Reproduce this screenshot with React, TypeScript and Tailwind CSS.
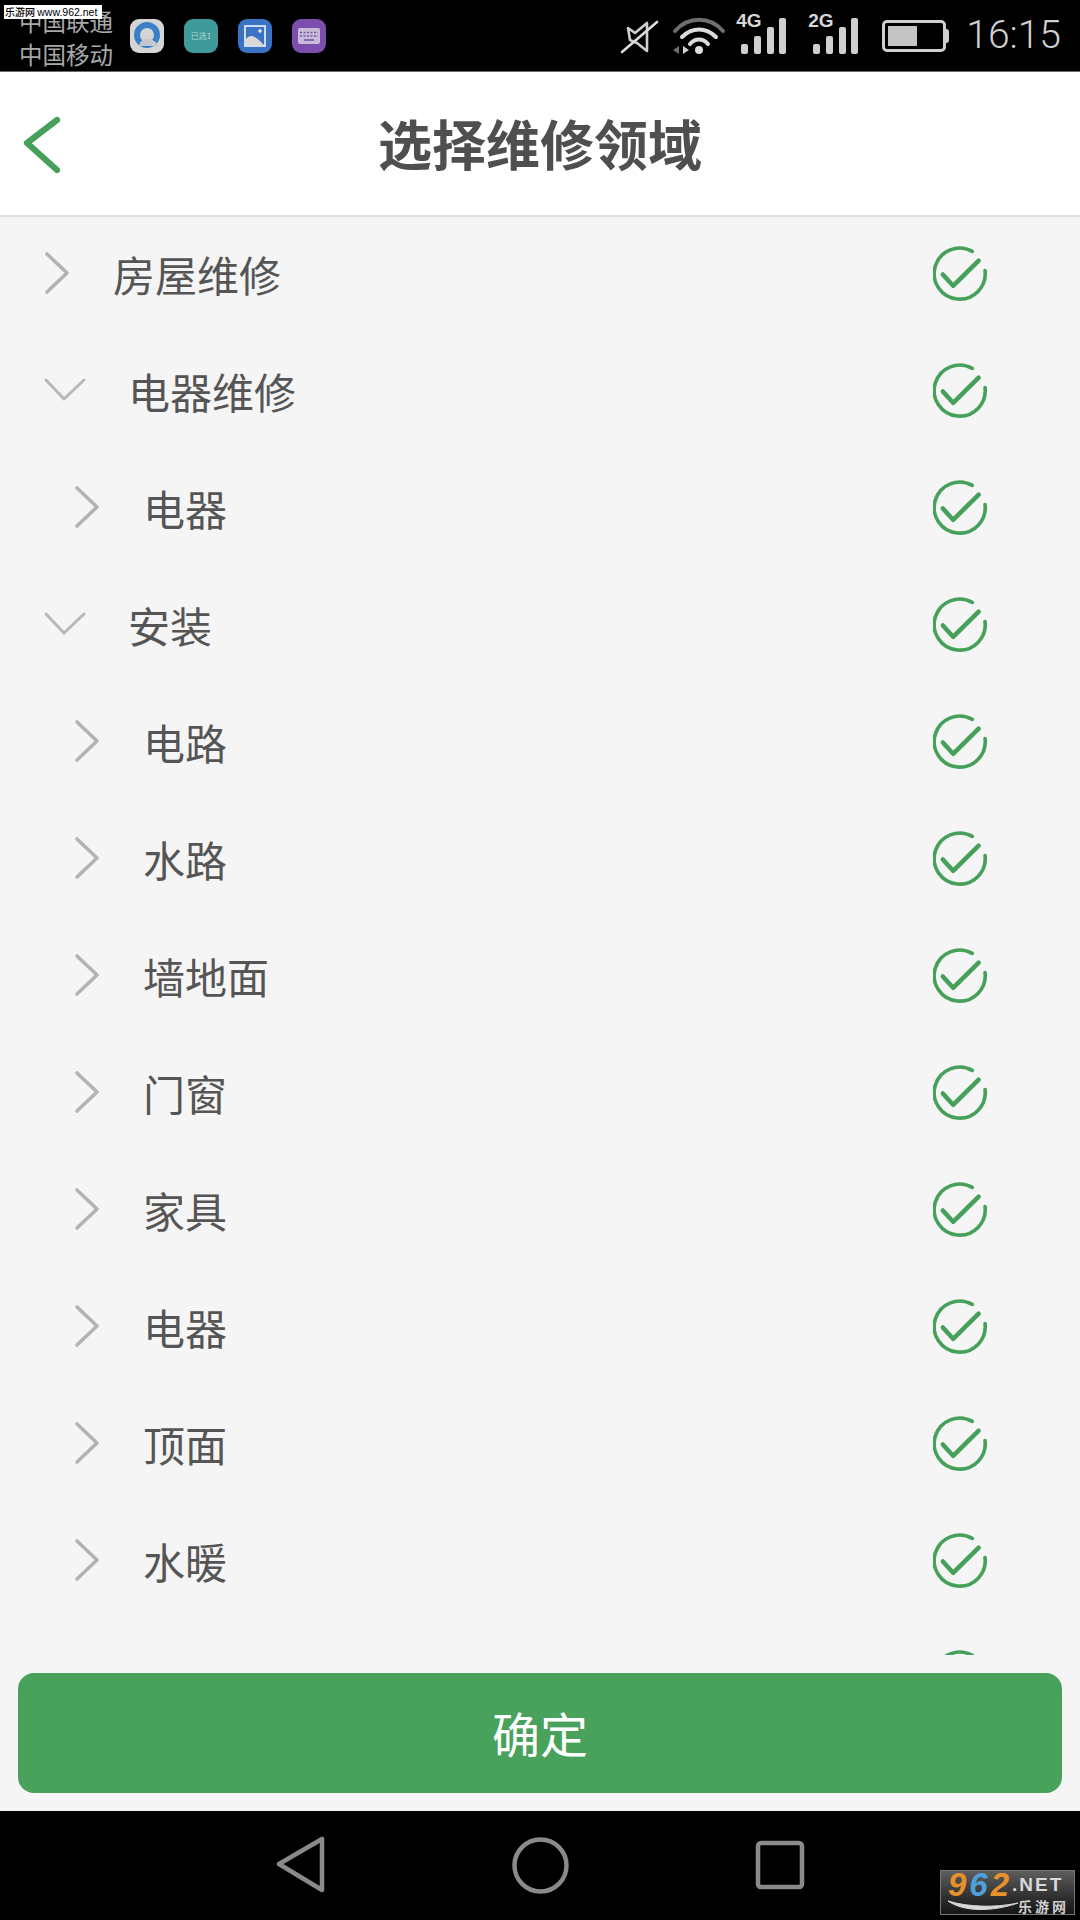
const CJK = { fontFamily: '"Noto Sans CJK SC", "Noto Sans", sans-serif' };

const rows: { t: string; kind: "r" | "d" | "s"; }[] = [
  { t: "房屋维修", kind: "r" },
  { t: "电器维修", kind: "d" },
  { t: "电器", kind: "s" },
  { t: "安装", kind: "d" },
  { t: "电路", kind: "s" },
  { t: "水路", kind: "s" },
  { t: "墙地面", kind: "s" },
  { t: "门窗", kind: "s" },
  { t: "家具", kind: "s" },
  { t: "电器", kind: "s" },
  { t: "顶面", kind: "s" },
  { t: "水暖", kind: "s" },
  { t: "", kind: "s" },
];

function Check() {
  return (
    <svg width="55" height="55" viewBox="0 0 56 56" fill="none" stroke="#46a05a" strokeWidth="3.7" strokeLinecap="round" strokeLinejoin="round">
      <path d="M40 5.5A26 26 0 1 0 53 25" />
      <path d="M10 29L20.5 40.5L46.5 15" strokeWidth="4.6" />
    </svg>
  );
}

function Right() {
  return (
    <svg width="26" height="44" viewBox="0 0 26 44" fill="none" stroke="#b3b3b3" strokeWidth="3.6" strokeLinecap="round" strokeLinejoin="round">
      <path d="M3 3L23 22L3 41" />
    </svg>
  );
}

function Down() {
  return (
    <svg width="42" height="26" viewBox="0 0 42 26" fill="none" stroke="#b8b8b8" strokeWidth="3" strokeLinecap="round" strokeLinejoin="round">
      <path d="M2 3L20 22L40 3" />
    </svg>
  );
}

function Row({ t, kind }: { t: string; kind: "r" | "d" | "s" }) {
  const left = kind === "s" ? "pl-[74px]" : "pl-[44px]";
  const iconW = kind === "s" ? "w-[69px]" : kind === "d" ? "w-[84px]" : "w-[69px]";
  return (
    <div className={`h-[117px] shrink-0 flex items-center pr-[92px] pb-[5px] ${left}`}>
      <div className={`${iconW} shrink-0 flex items-center`}>{kind === "d" ? <Down /> : <Right />}</div>
      <div className="flex-1 pt-[2px] text-[42px] leading-none text-[#555555]">{t}</div>
      <Check />
    </div>
  );
}

function Bars() {
  return (
    <svg width="46" height="38" viewBox="0 0 46 38" fill="#cfcfcf">
      <rect x="0" y="26" width="7" height="10" rx="2" />
      <rect x="13" y="18" width="7" height="18" rx="2" />
      <rect x="26" y="9" width="7" height="27" rx="2" />
      <rect x="38" y="0" width="7" height="36" rx="2" />
    </svg>
  );
}

function StatusBar() {
  return (
    <div className="relative h-[72px] shrink-0 bg-black border-b border-[#6b6b6b] flex items-center pl-[19px] pr-[19px] text-[#b5b5b5]">
      <div className="w-[111px] shrink-0 pt-[5px] text-[23.5px] leading-[33px] text-[#a8a8a8] whitespace-nowrap">
        <div>中国联通</div>
        <div>中国移动</div>
      </div>
      <div className="flex gap-5">
        <div className="w-[34px] h-[34px] rounded-[9px] bg-[#d5d5d5] flex items-center justify-center">
          <svg width="28" height="28" viewBox="0 0 28 28" fill="none">
            <circle cx="14" cy="13" r="10" stroke="#3a7fc8" strokeWidth="6" />
            <path d="M6 24C8 15 18 13 26 24Z" fill="#c4c8cc" />
          </svg>
        </div>
        <div className="w-[34px] h-[34px] rounded-[9px] bg-[#409a9a] flex items-center justify-center text-[8px] leading-none text-[#a8d8d8]">
          已选1
        </div>
        <div className="w-[34px] h-[34px] rounded-[9px] bg-[#3a72c4] flex items-center justify-center">
          <svg width="24" height="24" viewBox="0 0 24 24" fill="none">
            <rect x="2" y="2" width="20" height="20" fill="#3a72c4" stroke="#d0dcee" strokeWidth="2" />
            <path d="M3 21L3 15C8 9 13 13 21 21Z" fill="#d8d8d8" />
            <circle cx="17" cy="7" r="1.8" fill="#e8e8e8" />
          </svg>
        </div>
        <div className="w-[34px] h-[34px] rounded-[9px] bg-[#7c4fae] flex items-center justify-center">
          <svg width="24" height="18" viewBox="0 0 24 18" fill="none">
            <rect x="1" y="1" width="22" height="16" rx="2" fill="#c8bcd8" />
            <path d="M3 5.5H21M3 9H21" stroke="#7c4fae" strokeWidth="1.6" strokeDasharray="2 1.5" />
            <path d="M7 13H17" stroke="#7c4fae" strokeWidth="1.6" />
          </svg>
        </div>
      </div>
      <div className="ml-auto flex items-center">
        <svg width="40" height="40" viewBox="0 0 40 40" fill="none" stroke="#cfcfcf" strokeWidth="2.6" strokeLinejoin="round" strokeLinecap="round">
          <path d="M8 12L15 17L27 7L27 35L17 27L10 24Z" />
          <path d="M2 36L37 6" stroke="#dcdcdc" />
        </svg>
        <svg className="ml-[12px]" width="54" height="38" viewBox="0 0 54 38" fill="none" strokeLinecap="round">
          <path d="M3 14C16 -1 38 -1 51 14" stroke="#6e6e6e" strokeWidth="4" />
          <path d="M10 20C20 10 34 10 44 20" stroke="#dcdcdc" strokeWidth="4" />
          <path d="M18 27C23 21 31 21 36 27" stroke="#dcdcdc" strokeWidth="4" />
          <circle cx="27" cy="33" r="4" fill="#dcdcdc" />
          <path d="M1 33L7 29L7 37Z" fill="#6e6e6e" />
          <path d="M11 29L17 33L11 37Z" fill="#cfcfcf" />
        </svg>
        <div className="relative ml-[15px] w-[46px] h-[40px] flex items-end">
          <span className="absolute -top-[5px] -left-[5px] text-[19px] leading-none font-bold text-[#d8d8d8]" style={{ fontFamily: '"Liberation Sans", sans-serif' }}>4G</span>
          <Bars />
        </div>
        <div className="relative ml-[26px] w-[46px] h-[40px] flex items-end">
          <span className="absolute -top-[5px] -left-[5px] text-[19px] leading-none font-bold text-[#d8d8d8]" style={{ fontFamily: '"Liberation Sans", sans-serif' }}>2G</span>
          <Bars />
        </div>
        <div className="ml-[23px] flex items-center">
          <div className="w-[64px] h-[32px] rounded-[5px] border-[3px] border-[#cfcfcf] p-[3px] flex">
            <div className="w-[29px] bg-[#c4c4c4]" />
          </div>
          <div className="w-[3px] h-[14px] bg-[#cfcfcf] rounded-r-sm" />
        </div>
        <div className="ml-[17px] text-[39px] leading-none font-light text-[#d0d0d0]" style={{ fontFamily: 'Roboto, sans-serif' }}>16:15</div>
      </div>
      <div className="absolute left-[4px] top-[5px] h-[14px] w-[98px] bg-white text-black text-[10px] leading-[14px] pl-[1px] whitespace-nowrap font-medium">
        乐游网 <span className="text-[10.5px]" style={{ fontFamily: '"Liberation Sans", sans-serif' }}>www.962.net</span>
      </div>
    </div>
  );
}

function NavBar() {
  return (
    <div className="relative h-[109px] shrink-0 bg-black flex items-center justify-center gap-[186px] pb-[1px]">
      <svg width="50" height="58" viewBox="0 0 50 58" fill="none" stroke="#8a8a8a" strokeWidth="4.5" strokeLinejoin="round">
        <path d="M46 3L46 54L3 28Z" />
      </svg>
      <svg width="57" height="57" viewBox="0 0 57 57" fill="none" stroke="#8a8a8a" strokeWidth="4.5">
        <circle cx="28.5" cy="28.5" r="26" />
      </svg>
      <svg width="50" height="50" viewBox="0 0 50 50" fill="none" stroke="#8a8a8a" strokeWidth="4.5" strokeLinejoin="round">
        <rect x="3" y="3" width="44" height="44" rx="3" />
      </svg>
      <div className="absolute left-[940px] top-[59px] w-[135px] h-[45px] border border-[#777777] bg-gradient-to-b from-[#5e5e5e] to-[#151515]">
        <div className="h-[27px] flex items-center pl-[7px] whitespace-nowrap italic font-bold" style={{ fontFamily: '"Liberation Sans", sans-serif' }}>
          <span className="text-[33px] leading-[27px] tracking-[3px] text-[#e8912a]">9</span>
          <span className="text-[33px] leading-[27px] tracking-[3px] text-[#4e9fdc]">6</span>
          <span className="text-[33px] leading-[27px] tracking-[3px] text-[#e8912a]">2</span>
          <span className="text-[19px] leading-[27px] not-italic text-[#d8d8d8] tracking-[2px]">.NET</span>
        </div>
        <div className="h-[16px] flex justify-end pr-[5px] text-[14px] leading-[16px] font-bold text-[#cfcfcf] tracking-[3px]">乐游网</div>
        <svg className="absolute left-[7px] top-[29px]" width="72" height="14" viewBox="0 0 72 14" fill="none">
          <path d="M0 1C16 12 44 12 70 3C46 8 20 7 0 1Z" fill="#d8d8d8" stroke="#d8d8d8" />
        </svg>
      </div>
    </div>
  );
}

export default function App() {
  return (
    <div className="w-[1080px] h-[1920px] flex flex-col bg-[#f5f5f5] overflow-hidden" style={CJK}>
      <StatusBar />
      <div className="relative h-[143px] shrink-0 bg-white flex items-center justify-center pb-[2px]">
        <svg className="absolute left-[22px] top-[44px]" width="40" height="58" viewBox="0 0 40 58" fill="none" stroke="#46a05a" strokeWidth="6.2" strokeLinecap="round" strokeLinejoin="round">
          <path d="M35 4L5 27L35 54" />
        </svg>
        <div className="text-[54px] leading-none font-bold text-[#4f4f4f]">选择维修领域</div>
      </div>
      <div className="h-[2px] shrink-0 bg-[#dfdfdf]" />
      <div className="h-[1438px] shrink-0 flex flex-col overflow-hidden">
        {rows.map((r, i) => (
          <Row key={i} t={r.t} kind={r.kind} />
        ))}
      </div>
      <div className="flex-1 px-[18px] pt-[18px]">
        <div className="h-[120px] rounded-[16px] bg-[#49a25b] flex items-center justify-center pb-[2px] text-[48px] leading-none text-white">
          确定
        </div>
      </div>
      <NavBar />
    </div>
  );
}
